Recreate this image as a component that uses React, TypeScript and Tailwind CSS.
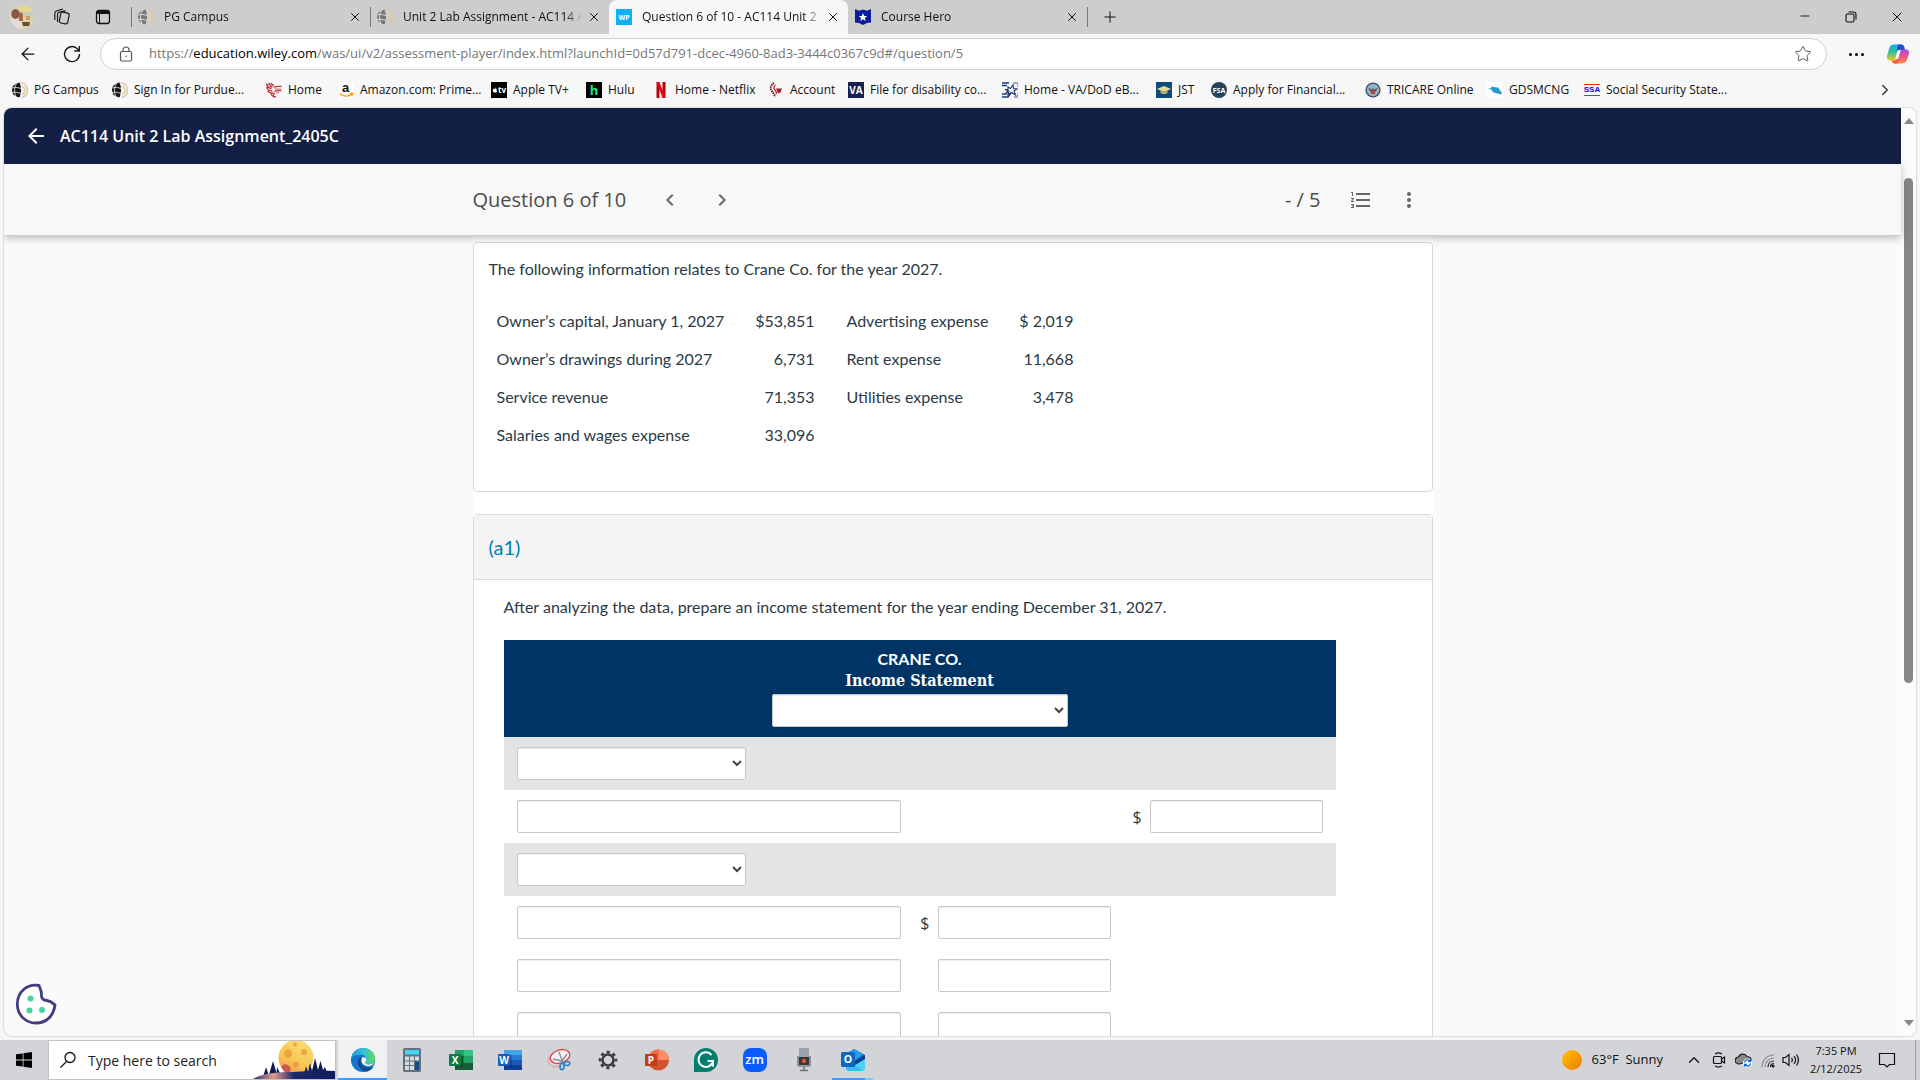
import type { ReactNode } from 'react';
import {
  MdArrowBack,
  MdChevronLeft,
  MdChevronRight,
  MdFormatListNumbered,
  MdMoreVert,
} from 'react-icons/md';
import { FaApple } from 'react-icons/fa';
import { ArrowLeft, ChevronRight, ChevronUp, Minus, Plus, Star, X } from 'lucide-react';

/* ---------- favicons ---------- */

function Tile({ className, children }: { className: string; children: ReactNode }) {
  return (
    <span className={`flex h-4 w-4 shrink-0 items-center justify-center overflow-hidden font-bold leading-none ${className}`}>
      {children}
    </span>
  );
}

function GlobalIcon({ dark = '#161616' }: { dark?: string }) {
  return (
    <svg viewBox="0 0 16 16" className="h-4 w-4 shrink-0">
      <path d="M7.500.5C2.500 1.500 0 4.500 0 8s2 5.500 4 6.300l3.500 1.200C9.500 11 9.500 5 7.500.5Z" fill={dark} />
      <path d="M5.500.5C2 4 1.800 10 4 15M.5 6C3 5 6 5.500 9 6.500M0 10.500c3-.8 6 0 9 1" fill="none" stroke="#f2f2f2" strokeWidth=".8" />
      <path d="M8.500.8c4.500.4 7 3.500 7 7.200S13 14.500 10 15.300" fill="none" stroke="#dcc9a4" strokeWidth="1.500" />
      <path d="M9.800 4c2 .6 3 2.200 3 4.300s-.9 3.600-2.500 4.400" fill="none" stroke="#e0cfab" strokeWidth="1.800" />
    </svg>
  );
}

function PhoenixIcon() {
  return (
    <svg viewBox="0 0 16 16" className="h-4 w-4 shrink-0" fill="none" stroke="#c0353d">
      <path d="M.8 1.500c0 3 1.700 4.500 4.700 5M3 .8c0 2.400 1.200 3.700 3.500 4.200M.8 5c.5 3 2.500 4 5.500 4M1.800 8.800c1.300 2 3.200 2.700 5.200 2.200M5 1c.4 1.400 1.400 2.200 3 2.500" strokeWidth="1.500" />
      <path d="M8 5.500c2-1.800 4.500-1 7.500-1M8.500 9.500c2-1.500 4-.8 7-.8M5 12c1 2 3 3 5 3.200M8.500 10.500l-1 3" strokeWidth="1.300" />
      <path d="M8.500 7h6.500M10 11.500l3-1.500" strokeWidth=".8" />
    </svg>
  );
}

function AmazonIcon() {
  return (
    <svg viewBox="0 0 16 16" className="h-4 w-4 shrink-0">
      <rect width="16" height="16" rx="2" fill="#fff" />
      <text x="4" y="10" fontSize="13" fontWeight="700" fontFamily="Liberation Sans, sans-serif" fill="#111">a</text>
      <path d="M1.500 11.500c4 3.500 9 3.200 12.500.6M12 11.200l2.500.3-.6 2.200" fill="none" stroke="#f90" strokeWidth="1.500" />
    </svg>
  );
}

function NetflixIcon() {
  return (
    <svg viewBox="0 0 16 16" className="h-4 w-4 shrink-0">
      <path d="M3.500 0h3v16h-3zM9.500 0h3v16h-3z" fill="#b1060f" />
      <path d="M3.500 0h3l6 16h-3Z" fill="#e50914" />
    </svg>
  );
}

function AccountIcon() {
  return (
    <svg viewBox="0 0 16 16" className="h-4 w-4 shrink-0">
      <path d="M6 1C2.500 3 2 6 3.500 8.500S6.500 12 7 15" fill="none" stroke="#6b1b22" strokeWidth="2" strokeDasharray="1.500 .8" />
      <path d="M7.500 3c-2 1.500-2 3.500-.5 5s1.500 2.500 1.500 4" fill="none" stroke="#c52a33" strokeWidth="1.300" />
      <path d="M8 6.500h6l-1.500 4-2.500 1Z" fill="#a0242c" />
    </svg>
  );
}

function DodIcon() {
  return (
    <svg viewBox="0 0 16 16" className="h-4 w-4 shrink-0">
      <path d="M0 1h7M0 3.500h5M0 15h6l3-4M0 12h4l2-3" stroke="#1d3778" strokeWidth="1.600" fill="none" />
      <path d="m6 5 2.500 1.500L11 3l.6 3.500L15 7l-3 2 1.500 4-4-2.500L6 13l1-4-4-1.500h3Z" fill="none" stroke="#1d3778" strokeWidth="1.100" />
      <path d="M11 1h5v4M12 15h4v-4" stroke="#8292b8" strokeWidth="1.600" fill="none" />
    </svg>
  );
}

function JstIcon() {
  return (
    <svg viewBox="0 0 16 16" className="h-4 w-4 shrink-0">
      <rect width="16" height="16" fill="#0e4a80" />
      <path d="m1 7 7-3 7 3-7 3Z" fill="#e8dc93" />
      <path d="M4.500 8.800V11c2 1.400 5 1.400 7 0V8.800L8 10.500Z" fill="#c9bd71" />
    </svg>
  );
}

function TricareIcon() {
  return (
    <svg viewBox="0 0 16 16" className="h-4 w-4 shrink-0">
      <circle cx="8" cy="8" r="7.600" fill="#34537f" />
      <circle cx="8" cy="8" r="5.800" fill="#8eb4dc" stroke="#cbb98b" strokeWidth=".8" />
      <path d="M3 5.500 7 8l1-2.500L9 8l4-2.500-2.500 4-1 2.500h-3l-1-2.500Z" fill="#5d4a2d" />
      <path d="M6.500 8.500h3v2l-1.500 1.600-1.500-1.600Z" fill="#d6453e" />
    </svg>
  );
}

function GdsIcon() {
  return (
    <svg viewBox="0 0 16 16" className="h-4 w-4 shrink-0">
      <rect width="16" height="16" fill="#fff" />
      <path d="M0 6.500h3.500L5 4.500l3 .8 3 .2 1.500 2L15 11l-.5 1.500-4-1-4-1L4 7.500Z" fill="#2b95cf" />
    </svg>
  );
}

function SsaIcon() {
  return (
    <span className="flex h-4 w-4 shrink-0 items-center justify-center">
      <span className="flex h-3 w-4 items-center justify-center border-y border-[#ff1a1a] font-['Liberation_Sans'] text-[8px] font-bold leading-none text-[#0a0adf]">
        SSA
      </span>
    </span>
  );
}

function CourseHeroIcon() {
  return (
    <svg viewBox="0 0 16 16" className="h-4 w-4 shrink-0">
      <path d="m0 0 4 1.800L8 .5l4 1.300L16 0v13.500l-4 .6L8 16l-4-1.900-4-.6Z" fill="#0c1c9a" />
      <path d="m8 4 1.200 2.900 3 .2-2.300 1.900.8 3L8 10.300 5.300 12l.8-3-2.300-1.900 3-.2Z" fill="#fff" />
    </svg>
  );
}

/* ---------- browser chrome ---------- */

const tabs = [
  { title: 'PG Campus', icon: <GlobalIcon dark="#777777" />, active: false },
  { title: 'Unit 2 Lab Assignment - AC114 A', icon: <GlobalIcon dark="#777777" />, active: false },
  { title: 'Question 6 of 10 - AC114 Unit 2 L', icon: <Tile className="bg-[#0db1f8] text-[7px] text-white">WP</Tile>, active: true },
  { title: 'Course Hero', icon: <CourseHeroIcon />, active: false },
];

const bookmarks = [
  { label: 'PG Campus', width: 'w-[100px]', icon: <GlobalIcon /> },
  { label: 'Sign In for Purdue...', width: 'w-[154px]', icon: <GlobalIcon /> },
  { label: 'Home', width: 'w-[72px]', icon: <PhoenixIcon /> },
  { label: 'Amazon.com: Prime...', width: 'w-[153px]', icon: <AmazonIcon /> },
  {
    label: 'Apple TV+',
    width: 'w-[95px]',
    icon: (
      <Tile className="bg-black text-[8px] text-white">
        <FaApple size={6} />
        tv
      </Tile>
    ),
  },
  { label: 'Hulu', width: 'w-[67px]', icon: <Tile className="bg-black text-[13px] text-[#1ce783]">h</Tile> },
  { label: 'Home - Netflix', width: 'w-[115px]', icon: <NetflixIcon /> },
  { label: 'Account', width: 'w-[80px]', icon: <AccountIcon /> },
  { label: 'File for disability co...', width: 'w-[154px]', icon: <Tile className="bg-[#15204f] text-[10px] text-white">VA</Tile> },
  { label: 'Home - VA/DoD eB...', width: 'w-[154px]', icon: <DodIcon /> },
  { label: 'JST', width: 'w-[55px]', icon: <JstIcon /> },
  { label: 'Apply for Financial...', width: 'w-[154px]', icon: <Tile className="rounded-full bg-[#244457] text-[7px] text-white">FSA</Tile> },
  { label: 'TRICARE Online', width: 'w-[122px]', icon: <TricareIcon /> },
  { label: 'GDSMCNG', width: 'w-[97px]', icon: <GdsIcon /> },
  { label: 'Social Security State...', width: 'w-[154px]', icon: <SsaIcon /> },
];

function Avatar() {
  return (
    <svg viewBox="0 0 24 24" className="h-6 w-6">
      <defs>
        <clipPath id="avatar">
          <circle cx="12" cy="12" r="12" />
        </clipPath>
      </defs>
      <g clipPath="url(#avatar)">
        <rect width="24" height="24" fill="#ddd3ae" />
        <path d="M9 0h15v8H12Z" fill="#e6d78c" />
        <path d="M14 7h10v5H14Z" fill="#c3ccc4" />
        <path d="M0 14c4-3 9-1 11 3l1 7H0Z" fill="#e3ddd8" />
        <ellipse cx="5.500" cy="9" rx="4.200" ry="5" fill="#8a5846" />
        <path d="M9 8c2-1.500 4-.5 4 2v6H9Z" fill="#a9683f" />
        <path d="M12 17h8l-1 4h-6Z" fill="#6a4a34" />
        <path d="M16 11h4v4h-4Z" fill="#d09a57" />
      </g>
    </svg>
  );
}

function TabStrip() {
  return (
    <div className="flex h-[34px] items-center bg-[#cdcdcd]">
      <div className="flex w-[131px] shrink-0 items-center pl-[10px]">
        <button aria-label="Profile" className="mr-[19px]">
          <Avatar />
        </button>
        <button aria-label="Workspaces" className="mr-6">
          <svg viewBox="0 0 18 18" className="h-[18px] w-[18px]" fill="none" stroke="#1b1b1b" strokeWidth="1.200">
            <rect x="7" y="4.500" width="8.500" height="11" rx="2" transform="rotate(12 11 10)" />
            <path d="M4.500 14V6.500a2.500 2.500 0 0 1 2-2.400l6-1.300M1.800 12V5.300a2.500 2.500 0 0 1 2-2.400L10 1" />
          </svg>
        </button>
        <button aria-label="Tab actions">
          <svg viewBox="0 0 16 16" className="h-4 w-4" fill="none" stroke="#111" strokeWidth="1.300">
            <rect x="1.500" y="1.500" width="13" height="13" rx="2.500" />
            <path d="M1.500 3.500h13" strokeWidth="3" />
            <path d="M4.500 5v9" strokeWidth="1" />
          </svg>
        </button>
      </div>
      {tabs.map((tab, i) => (
        <div
          key={tab.title}
          className={`flex h-full w-[239px] items-center pl-[7px] pr-2 ${
            tab.active ? 'rounded-t-lg bg-[#f7f7f7]' : ''
          } ${i < 2 ? 'bg-[linear-gradient(#777,#777)] bg-[length:1px_20px] bg-[position:left_center] bg-no-repeat' : ''}`}
        >
          {tab.icon}
          <span className="ml-[10px] min-w-0 flex-1 overflow-hidden whitespace-nowrap [mask-image:linear-gradient(to_right,#000_90%,transparent)]">
            {tab.title}
          </span>
          <button aria-label={`Close ${tab.title}`} className="ml-1">
            <X size={14} strokeWidth={1.7} />
          </button>
        </div>
      ))}
      <div className="h-5 w-px bg-[#777]" />
      <button aria-label="New tab" className="ml-[13px]">
        <Plus size={18} strokeWidth={1.3} />
      </button>
      <div className="ml-auto flex">
        <button aria-label="Minimize" className="flex w-[46px] justify-center">
          <Minus size={14} strokeWidth={1.6} />
        </button>
        <button aria-label="Restore" className="flex w-[46px] items-center justify-center">
          <svg viewBox="0 0 12 12" className="h-3 w-3" fill="none" stroke="#111" strokeWidth="1.100">
            <rect x="1" y="3" width="8" height="8" rx="1.500" />
            <path d="M3.500 1h5A2.500 2.500 0 0 1 11 3.500v5" />
          </svg>
        </button>
        <button aria-label="Close" className="flex w-[46px] justify-center">
          <X size={16} strokeWidth={1.5} />
        </button>
      </div>
    </div>
  );
}

function CopilotIcon() {
  return (
    <svg viewBox="0 0 24 24" className="h-6 w-6">
      <defs>
        <linearGradient id="cpA" x1="0" y1="0" x2="0" y2="1">
          <stop offset="0" stopColor="#1fa3ee" />
          <stop offset=".45" stopColor="#2bbfa0" />
          <stop offset="1" stopColor="#f4c81e" />
        </linearGradient>
        <linearGradient id="cpB" x1="0" y1="0" x2="0" y2="1">
          <stop offset="0" stopColor="#a14ee0" />
          <stop offset=".5" stopColor="#f0508a" />
          <stop offset="1" stopColor="#fb8f4b" />
        </linearGradient>
      </defs>
      <path d="M8 2.500h7.500L11 18.500H4.500C1.500 18.500.3 16.500 1 14L3.500 5.500C4.200 3.500 5.700 2.500 8 2.500Z" fill="url(#cpA)" />
      <path d="M12 2.500h3c2 0 3 1 3.500 3l.6 2.500H14c-2 0-3 1-3.500 3Z" fill="#1c50cf" />
      <path d="M16 21.500H8.500L13 7.500h6.500c3 0 4.200 2 3.500 4.500L20.500 18.500c-.7 2-2.200 3-4.500 3Z" fill="url(#cpB)" />
      <path d="M12 21.500H9c-2 0-3-1-3.500-3H10c2 0 3-1 3.500-3Z" fill="#ee5d3d" />
      <path d="m11.500 8.500 3.300-.5-2.600 8.500-3 .7Z" fill="#fff" />
    </svg>
  );
}

function Toolbar() {
  return (
    <div className="flex h-10 items-center">
      <button aria-label="Back" className="ml-[18px]">
        <ArrowLeft size={20} strokeWidth={1.5} />
      </button>
      <button aria-label="Refresh" className="ml-6">
        <svg viewBox="0 0 20 20" className="h-5 w-5" fill="none" stroke="#1b1b1b" strokeWidth="1.400">
          <path d="M17.500 10A7.500 7.500 0 1 1 15 4.500l2 2M17.300 2v5h-5" />
        </svg>
      </button>
      <div className="ml-[18px] flex h-8 flex-1 items-center rounded-full border border-[#cfcfcf] bg-white pl-[18px] pr-[14px]">
        <svg viewBox="0 0 14 16" className="h-4 w-[14px]" fill="none" stroke="#555" strokeWidth="1.200">
          <rect x="1.500" y="5.500" width="11" height="9.500" rx="1.500" />
          <path d="M4 5.500V4a3 3 0 0 1 6 0v1.500" />
          <circle cx="7" cy="10.300" r=".8" fill="#555" stroke="none" />
        </svg>
        <span className="ml-4 flex-1 whitespace-nowrap text-[13px] text-[#767676]">
          https://<span className="text-black">education.wiley.com</span>
          /was/ui/v2/assessment-player/index.html?launchId=0d57d791-dcec-4960-8ad3-3444c0367c9d#/question/5
        </span>
        <button aria-label="Add to favorites">
          <Star size={18} strokeWidth={1.3} className="text-[#555]" />
        </button>
      </div>
      <button aria-label="Settings and more" className="ml-[22px] flex gap-[3px]">
        <span className="h-[3px] w-[3px] rounded-full bg-black" />
        <span className="h-[3px] w-[3px] rounded-full bg-black" />
        <span className="h-[3px] w-[3px] rounded-full bg-black" />
      </button>
      <button aria-label="Copilot" className="ml-[22px] mr-[10px]">
        <CopilotIcon />
      </button>
    </div>
  );
}

function BookmarkBar() {
  return (
    <nav className="flex h-[34px] items-center pb-[2px] pl-3">
      {bookmarks.map((b) => (
        <a key={b.label} href="#" className={`flex shrink-0 items-center gap-[6px] whitespace-nowrap ${b.width}`}>
          {b.icon}
          {b.label}
        </a>
      ))}
      <button aria-label="More favorites" className="ml-auto mr-[26px]">
        <ChevronRight size={18} strokeWidth={1.8} className="text-[#333]" />
      </button>
    </nav>
  );
}

/* ---------- assessment page ---------- */

const facts = [
  ['Owner’s capital, January 1, 2027', '$53,851', 'Advertising expense', '$ 2,019'],
  ['Owner’s drawings during 2027', '6,731', 'Rent expense', '11,668'],
  ['Service revenue', '71,353', 'Utilities expense', '3,478'],
  ['Salaries and wages expense', '33,096', '', ''],
];

const fieldStyle = 'h-[33px] rounded-xs border border-[#c8c8c8] bg-white shadow-[inset_0_1px_1px_rgba(0,0,0,0.08)]';

function BlankSelect({ label, width }: { label: string; width: string }) {
  return (
    <select aria-label={label} className={`block text-[#444] ${fieldStyle} ${width}`}>
      <option></option>
    </select>
  );
}

function AmountCell({ label, dollar = false }: { label: string; dollar?: boolean }) {
  return (
    <td className="px-[13px]">
      <div className="flex items-center justify-end gap-2">
        {dollar && <span className="font-['Open_Sans'] text-base">$</span>}
        <input type="text" aria-label={label} className={`w-[173px] ${fieldStyle}`} />
      </div>
    </td>
  );
}

function NameCell({ label }: { label: string }) {
  return (
    <td className="px-[13px]">
      <input type="text" aria-label={label} className={`block w-full ${fieldStyle}`} />
    </td>
  );
}

function IncomeStatement() {
  return (
    <table className="mt-[21px] w-[832px] table-fixed border-collapse">
      <colgroup>
        <col className="w-[410px]" />
        <col className="w-[210px]" />
        <col className="w-[212px]" />
      </colgroup>
      <thead>
        <tr className="h-[97px] bg-[#003464] text-white">
          <th colSpan={3} className="pt-2 align-top">
            <div className="leading-[22px]">CRANE CO.</div>
            <div className="font-['DejaVu_Serif_Condensed','DejaVu_Serif',serif] leading-[22px]">Income Statement</div>
            <div className="flex justify-center pt-[2px]">
              <BlankSelect label="Statement period" width="w-[296px]" />
            </div>
          </th>
        </tr>
      </thead>
      <tbody>
        <tr className="h-[53px] bg-[#e4e4e4]">
          <td colSpan={3} className="px-[13px]">
            <BlankSelect label="First section" width="w-[229px]" />
          </td>
        </tr>
        <tr className="h-[53px]">
          <NameCell label="Line 1 name" />
          <td></td>
          <AmountCell label="Line 1 amount" dollar />
        </tr>
        <tr className="h-[53px] bg-[#e4e4e4]">
          <td colSpan={3} className="px-[13px]">
            <BlankSelect label="Second section" width="w-[229px]" />
          </td>
        </tr>
        {[2, 3, 4].map((n) => (
          <tr key={n} className="h-[53px]">
            <NameCell label={`Line ${n} name`} />
            <AmountCell label={`Line ${n} amount`} dollar={n === 2} />
            <td></td>
          </tr>
        ))}
      </tbody>
    </table>
  );
}

function QuestionBar() {
  return (
    <div className="relative z-10 border-b border-[#cfcfcf] bg-[#f8f8f8] shadow-[0_2px_8px_rgba(0,0,0,0.25)]">
      <div className="mx-auto flex h-[71px] max-w-[960px] items-center font-['Open_Sans'] text-xl text-[#4c4c4c]">
        <h2>Question 6 of 10</h2>
        <button aria-label="Previous question" className="ml-8 text-[#666]">
          <MdChevronLeft size={24} />
        </button>
        <button aria-label="Next question" className="ml-7 text-[#666]">
          <MdChevronRight size={24} />
        </button>
        <span className="ml-auto">- / 5</span>
        <button aria-label="Question list" className="ml-7 text-[#666]">
          <MdFormatListNumbered size={24} />
        </button>
        <button aria-label="More options" className="ml-6 mr-3 text-[#666]">
          <MdMoreVert size={24} />
        </button>
      </div>
    </div>
  );
}

function QuestionBody() {
  return (
    <div className="mx-auto min-h-full max-w-[960px] bg-white pt-[6px] font-['Lato'] text-base text-[#2b3a44]">
      <section className="rounded border border-[#d9d9d9] px-[15px] pb-[37px] pt-[14px]">
        <p>The following information relates to Crane Co. for the year 2027.</p>
        <table className="mt-[21px] whitespace-nowrap">
          <tbody>
            {facts.map((row) => (
              <tr key={row[0]} className="h-[38px]">
                <td className="w-[250px] pl-2">{row[0]}</td>
                <td className="w-[76px] text-right">{row[1]}</td>
                <td className="w-[173px] pl-8">{row[2]}</td>
                <td className="w-[85px] text-right">{row[3]}</td>
              </tr>
            ))}
          </tbody>
        </table>
      </section>
      <section className="mt-[22px] rounded-t border border-[#d9d9d9]">
        <h3 className="flex h-[65px] items-center border-b border-[#d9d9d9] bg-[#f4f4f4] px-[15px] text-xl text-[#007fae]">
          (a1)
        </h3>
        <div className="px-[30px] pb-6 pt-[15px]">
          <p>After analyzing the data, prepare an income statement for the year ending December 31, 2027.</p>
          <IncomeStatement />
        </div>
      </section>
    </div>
  );
}

function CookieButton() {
  return (
    <button aria-label="Cookie preferences" className="absolute bottom-[11px] left-[11px]">
      <svg viewBox="0 0 42 42" className="h-[42px] w-[42px]">
        <path
          d="M24 2.500C12 .5 2.300 9 2.300 21c0 11 8.200 19 18.700 19s17.500-7 19-18c-3-2.500-4.500-4-8-4.500-4 0-6-2.500-5.500-6.500 0-3-1-5-2.500-8.500Z"
          fill="#fff"
          stroke="#443b80"
          strokeWidth="2.800"
          strokeLinejoin="round"
        />
        <circle cx="15.500" cy="15.500" r="3" fill="#47d49a" />
        <circle cx="14.500" cy="27.500" r="3" fill="#47d49a" />
        <circle cx="27" cy="27" r="3" fill="#47d49a" />
      </svg>
    </button>
  );
}

function PageScrollbar() {
  return (
    <div className="flex w-[15px] shrink-0 flex-col items-center bg-[#fbfbfb] py-[10px]">
      <svg viewBox="0 0 10 6" className="h-[6px] w-[10px]">
        <path d="M5 0l5 6H0Z" fill="#868686" />
      </svg>
      <div className="mt-[54px] h-[505px] w-[9px] rounded-full bg-[#868686]" />
      <svg viewBox="0 0 10 6" className="mt-auto h-[6px] w-[10px]">
        <path d="M0 0h10L5 6Z" fill="#868686" />
      </svg>
    </div>
  );
}

function Page() {
  return (
    <main className="mx-1 mb-1 flex min-h-0 flex-1 overflow-hidden rounded-lg bg-[#fafafa] shadow-[0_0_2px_rgba(0,0,0,0.35)]">
      <div className="relative flex min-w-0 flex-1 flex-col">
        <header className="flex h-14 shrink-0 items-center gap-3 bg-[#131f45] pl-5 font-['Open_Sans'] text-base font-semibold text-white">
          <button aria-label="Back to assignments">
            <MdArrowBack size={24} />
          </button>
          <h1>AC114 Unit 2 Lab Assignment_2405C</h1>
        </header>
        <QuestionBar />
        <div className="min-h-0 flex-1 overflow-hidden">
          <QuestionBody />
        </div>
        <CookieButton />
      </div>
      <PageScrollbar />
    </main>
  );
}

/* ---------- taskbar ---------- */

function EdgeIcon() {
  return (
    <svg viewBox="0 0 24 24" className="h-6 w-6">
      <defs>
        <linearGradient id="edA" x1="0" y1="0" x2="1" y2="0">
          <stop offset="0" stopColor="#2597e0" />
          <stop offset=".5" stopColor="#2fc1dc" />
          <stop offset="1" stopColor="#64dc4f" />
        </linearGradient>
      </defs>
      <circle cx="12" cy="12" r="12" fill="#1277cd" />
      <path d="M.3 10C1.500 4 6.500 0 12.200 0 19 0 24 5 24 10.800c0 3.500-2.800 5.700-6 5.700-2.500 0-3.800-.8-3.800-1.600s1.200-1.300 1.200-3.400c0-2.700-2.600-5-6.200-5-3.500 0-7 1.500-8.900 3.500Z" fill="url(#edA)" />
      <path d="M10.500 8.500C6.500 10.500 6 15 8 18.500c2 3.300 5 5 8 5 2.800-.8 5.100-2.600 6.500-4.800-2 1-4 1.300-6 1-4-.6-6.500-3-6.800-6.200Z" fill="#114a8b" />
      <path d="M11 9.500c2.400-.6 4 .4 4.400 2 0 2.100-1.200 2.600-1.200 3.400s1.300 1.600 3.800 1.600c2 0 3.800-.8 5-2.200-.5 2.400-3 4-5.600 4-5 0-8.300-4-6.400-8.800Z" fill="#f0f1f3" />
    </svg>
  );
}

function CalculatorIcon() {
  return (
    <svg viewBox="0 0 24 24" className="h-6 w-6">
      <rect x="3" width="18" height="24" rx="1.500" fill="#63717f" />
      <rect x="5" y="2" width="14" height="4.500" fill="#43d6f4" />
      <path d="M5 8.500h4v4H5zM10 8.500h4v4h-4zM15 8.500h4v4h-4zM5 13.500h4v3.500H5zM10 13.500h4v3.500h-4zM5 18h4v4H5zM10 18h4v4h-4z" fill="#d7dbdf" />
      <path d="M15 13.500h4V22h-4z" fill="#154c8c" />
    </svg>
  );
}

function ExcelIcon() {
  return (
    <svg viewBox="0 0 24 24" className="h-6 w-6">
      <path d="M6 2h9v6H6z" fill="#21a366" />
      <path d="M15 2h9v6h-9z" fill="#33c481" />
      <path d="M6 8h9v7H6z" fill="#107c41" />
      <path d="M15 8h9v7h-9z" fill="#21a366" />
      <path d="M6 15h18v7H6z" fill="#185c37" />
      <path d="M6 7h8v12H6z" fill="#000" opacity=".25" />
      <rect y="6" width="12" height="12" rx="1" fill="#107c41" />
      <text x="6" y="15.500" textAnchor="middle" fontSize="10" fontWeight="700" fontFamily="Open Sans, sans-serif" fill="#fff">X</text>
    </svg>
  );
}

function WordIcon() {
  return (
    <svg viewBox="0 0 24 24" className="h-6 w-6">
      <path d="M6 2h18v5H6z" fill="#41a5ee" />
      <path d="M6 7h18v5H6z" fill="#2b7cd3" />
      <path d="M6 12h18v5H6z" fill="#185abd" />
      <path d="M6 17h18v5H6z" fill="#103f91" />
      <path d="M6 7h8v12H6z" fill="#000" opacity=".2" />
      <rect y="6" width="12" height="12" rx="1" fill="#185abd" />
      <text x="6" y="15.500" textAnchor="middle" fontSize="10" fontWeight="700" fontFamily="Open Sans, sans-serif" fill="#fff">W</text>
    </svg>
  );
}

function SnipIcon() {
  return (
    <svg viewBox="0 0 24 24" className="h-6 w-6" fill="none">
      <ellipse cx="11" cy="11.500" rx="10" ry="7" transform="rotate(-18 11 11.500)" stroke="#e7a4a8" strokeWidth="1.300" />
      <ellipse cx="13" cy="8.500" rx="10" ry="6.500" transform="rotate(-18 13 8.500)" fill="#f3f3f5" stroke="#de4b50" strokeWidth="1.400" />
      <path d="m12 4 4 11M6 11l9 2M15 13l5-7" stroke="#868b91" strokeWidth="1.300" />
      <ellipse cx="15" cy="18.500" rx="2" ry="3.200" stroke="#2384c8" strokeWidth="1.600" />
      <ellipse cx="20" cy="15.500" rx="2.800" ry="2" stroke="#2384c8" strokeWidth="1.600" />
    </svg>
  );
}

function GearIcon() {
  return (
    <svg viewBox="0 0 24 24" className="h-6 w-6" fill="none" stroke="#3c3c3c">
      <circle cx="12" cy="12" r="5.500" strokeWidth="2.600" />
      <circle cx="12" cy="12" r="8" strokeWidth="2.600" strokeDasharray="3.140 3.140" strokeDashoffset="1.570" />
    </svg>
  );
}

function PowerPointIcon() {
  return (
    <svg viewBox="0 0 24 24" className="h-6 w-6">
      <circle cx="13.500" cy="12" r="10.500" fill="#d35230" />
      <path d="M13.500 1.500A10.500 10.500 0 0 1 24 12H13.500Z" fill="#ff8f6b" />
      <path d="M13.500 1.500A10.500 10.500 0 0 0 3 12h10.500Z" fill="#ed6c47" />
      <rect y="6" width="12" height="12" rx="1" fill="#c43e1c" />
      <text x="6" y="15.500" textAnchor="middle" fontSize="10" fontWeight="700" fontFamily="Open Sans, sans-serif" fill="#fff">P</text>
    </svg>
  );
}

function GrammarlyIcon() {
  return (
    <svg viewBox="0 0 24 24" className="h-6 w-6">
      <path d="M12 0a12 12 0 1 1 0 24H0V12A12 12 0 0 1 12 0Z" fill="#027e6f" />
      <path d="M17.500 7A7.300 7.300 0 1 0 19 13h-5.500M19 13v5.500" fill="none" stroke="#fff" strokeWidth="2" />
    </svg>
  );
}

function MicIcon() {
  return (
    <svg viewBox="0 0 24 24" className="h-6 w-6">
      <path d="M5 8h14v8.500q0 2.500-2.500 2.500h-9Q5 19 5 16.500Z" fill="#8a9199" />
      <rect x="7" width="10" height="18" fill="#9aa3ad" />
      <rect x="7" y="9" width="10" height="8" fill="#33373c" />
      <circle cx="12" cy="13" r="2.200" fill="#e8551c" />
      <path d="M12 19v3M8 22.500h8" stroke="#6c7279" strokeWidth="1.600" />
    </svg>
  );
}

function OutlookIcon() {
  return (
    <svg viewBox="0 0 24 24" className="h-6 w-6">
      <path d="M4 6.500 13 1l11 6v7H4Z" fill="#1173ce" />
      <path d="m6 5.500 7-4.500 9 5-10 8H6Z" fill="#2a9be4" />
      <path d="M24 8 12 15v8h9.500c1.500 0 2.500-1 2.500-2.500Z" fill="#4fd0f5" />
      <path d="m24 7-10 6v4l10-6Z" fill="#0a3f8c" />
      <path d="M5 13v7.500C5 22 6 23 7.500 23H22L10 14Z" fill="#33bdf0" />
      <rect y="4" width="14" height="15" rx="1.500" fill="#0e66bf" />
      <text x="7" y="15.300" textAnchor="middle" fontSize="10.500" fontWeight="700" fontFamily="Open Sans, sans-serif" fill="#fff">O</text>
    </svg>
  );
}

function MoonArt() {
  return (
    <svg viewBox="0 0 82 38" className="h-[38px] w-[82px]">
      <defs>
        <linearGradient id="moon" x1="0.200" y1="1" x2="0.700" y2="0">
          <stop offset="0" stopColor="#ee8f45" />
          <stop offset=".4" stopColor="#f9c552" />
          <stop offset="1" stopColor="#fbdc76" />
        </linearGradient>
        <linearGradient id="hill" x1="0" y1="0" x2="1" y2="0">
          <stop offset="0" stopColor="#2a3370" />
          <stop offset=".25" stopColor="#e09a8c" />
          <stop offset=".5" stopColor="#1c2968" />
          <stop offset="1" stopColor="#101c5e" />
        </linearGradient>
      </defs>
      <circle cx="43" cy="16.500" r="17.500" fill="url(#moon)" />
      <g fill="#eba83f">
        <circle cx="35" cy="12.500" r="4.200" />
        <circle cx="51" cy="11" r="3" />
        <circle cx="42" cy="3.500" r="2" />
        <circle cx="43" cy="23.500" r="2.800" fill="#f09a48" />
      </g>
      <path d="M28 26a5 5 0 0 1 9 5l-5 1Z" fill="#d4574c" />
      <path
        d="m10 36 3-10 3 9 .5-3L20 20l3.500 12 .5-6 3 6 2 4ZM51 34l2-9 2 6 2-9 2 8 3-13 3 12 2.500-9 2.500 9 2-3 2 6Z"
        fill="#0f1a55"
      />
      <path d="M0 38c8-5 22-7 40-7 18-1.500 30-2 42-1v8Z" fill="url(#hill)" />
    </svg>
  );
}

const apps: { name: string; icon: ReactNode; state?: 'active' | 'open' }[] = [
  { name: 'Edge', icon: <EdgeIcon />, state: 'active' },
  { name: 'Calculator', icon: <CalculatorIcon /> },
  { name: 'Excel', icon: <ExcelIcon /> },
  { name: 'Word', icon: <WordIcon /> },
  { name: 'Snipping Tool', icon: <SnipIcon /> },
  { name: 'Settings', icon: <GearIcon /> },
  { name: 'PowerPoint', icon: <PowerPointIcon /> },
  { name: 'Grammarly', icon: <GrammarlyIcon /> },
  {
    name: 'Zoom',
    icon: (
      <span className="flex h-6 w-6 items-center justify-center rounded-lg bg-[#0b5cff] pb-[2px] text-[13px] font-semibold leading-none text-white">
        zm
      </span>
    ),
  },
  { name: 'Voice Recorder', icon: <MicIcon /> },
  { name: 'Outlook', icon: <OutlookIcon />, state: 'open' },
];

function Tray() {
  return (
    <div className="ml-auto flex h-full items-center">
      <span className="h-5 w-5 rounded-full bg-linear-to-br from-[#ffc400] to-[#f07800]" />
      <span className="ml-[10px] whitespace-pre text-[13px]">63°F  Sunny</span>
      <button aria-label="Show hidden icons" className="ml-[22px]">
        <ChevronUp size={18} strokeWidth={1.7} />
      </button>
      <svg viewBox="0 0 16 16" className="ml-2 h-4 w-4" fill="none" stroke="#111" strokeWidth="1.200">
        <rect x="2.500" y="4.500" width="8" height="7" rx="1" />
        <path d="m10.500 7 3-2v6l-3-2M4 2c2-1.200 5-1.200 7 0M4 14c2 1.200 5 1.200 7 0" />
      </svg>
      <svg viewBox="0 0 18 16" className="ml-2 h-4 w-[18px]">
        <path d="M4 12a3.500 3.500 0 0 1-.5-7C5 1.500 10 1 12 4.500c3 0 4.500 2 4 4.500Z" fill="#8a8a8a" stroke="#222" strokeWidth="1.200" />
        <circle cx="12.500" cy="11" r="4.600" fill="#fff" />
        <path d="M9.500 10.500a3 3 0 0 1 5.500-1.200M15.500 11.500a3 3 0 0 1-5.500 1.200M15.400 7.500v2.200h-2.200M9.600 14.500v-2.200h2.200" fill="none" stroke="#0a66c2" strokeWidth="1.300" />
      </svg>
      <svg viewBox="0 0 16 16" className="ml-[7px] h-4 w-4" fill="none" strokeWidth="1.200">
        <path d="M2 15C2 8 7 3 14 3M5 15c0-5 4-9 9-9" stroke="#888" />
        <path d="M8 15c0-3.500 2.500-6 6-6M10.500 15c0-2 1.500-3.500 3.500-3.500" stroke="#222" />
        <circle cx="13" cy="14" r="1.500" fill="#111" />
      </svg>
      <svg viewBox="0 0 18 16" className="ml-[6px] h-4 w-[18px]" fill="none" stroke="#111" strokeWidth="1.200">
        <path d="M1 5.500h2.500L7 2.500v11l-3.500-3H1ZM9.500 6c1 1.200 1 2.800 0 4M12 4c2 2.500 2 5.500 0 8M14.500 2.500c2.500 3.500 2.500 7.500 0 11" />
      </svg>
      <div className="ml-2 w-[56px] whitespace-nowrap text-center text-[11px] leading-[18px]">
        <div>7:35 PM</div>
        <div>2/12/2025</div>
      </div>
      <button aria-label="Notifications" className="ml-[14px] mr-[19px]">
        <svg viewBox="0 0 18 18" className="h-[18px] w-[18px]" fill="none" stroke="#111" strokeWidth="1.200">
          <path d="M1.500 2.500h15v11h-5L9 16l-2.500-2.500h-5Z" />
        </svg>
      </button>
      <div className="h-full w-[5px] border-l border-[#9a9b9e]" />
    </div>
  );
}

function Taskbar() {
  return (
    <footer className="flex h-10 shrink-0 items-center bg-[#d3d4d8]">
      <button aria-label="Start" className="flex w-12 justify-center">
        <svg viewBox="0 0 16 16" className="h-4 w-4">
          <path d="M0 2.300 6.700 1.400V7.600H0ZM7.500 1.300 16 0v7.600H7.500ZM0 8.400h6.700v6.200L0 13.700ZM7.500 8.400H16V16l-8.500-1.200Z" />
        </svg>
      </button>
      <label className="flex h-full w-[288px] items-end border border-[#c3c3c6] bg-white pl-[10px]">
        <svg viewBox="0 0 18 18" className="mb-[10px] h-[18px] w-[18px] shrink-0" fill="none" stroke="#111" strokeWidth="1.300">
          <circle cx="11" cy="6.500" r="5" />
          <path d="m7.500 10.500-6 6" />
        </svg>
        <input
          type="text"
          placeholder="Type here to search"
          aria-label="Search"
          className="ml-[11px] h-full min-w-0 flex-1 text-sm placeholder:text-[#222]"
        />
        <MoonArt />
      </label>
      <div className="ml-[2px] flex h-full">
        {apps.map((app) => (
          <button
            key={app.name}
            aria-label={app.name}
            className={`relative flex w-[49px] items-center justify-center ${app.state === 'active' ? 'bg-[#f0f1f3]' : ''}`}
          >
            {app.icon}
            {app.state === 'active' && <span className="absolute inset-x-0 bottom-0 h-[2px] bg-[#3f9bff]" />}
            {app.state === 'open' && (
              <span className="absolute inset-x-1 bottom-0 h-[2px] border-r-8 border-[#8cc0f8] bg-[#3f9bff]" />
            )}
          </button>
        ))}
      </div>
      <Tray />
    </footer>
  );
}

export default function App() {
  return (
    <div className="flex h-screen flex-col overflow-hidden bg-[#f7f7f7] font-['Open_Sans',sans-serif] text-xs text-[#111]">
      <TabStrip />
      <Toolbar />
      <BookmarkBar />
      <Page />
      <Taskbar />
    </div>
  );
}
